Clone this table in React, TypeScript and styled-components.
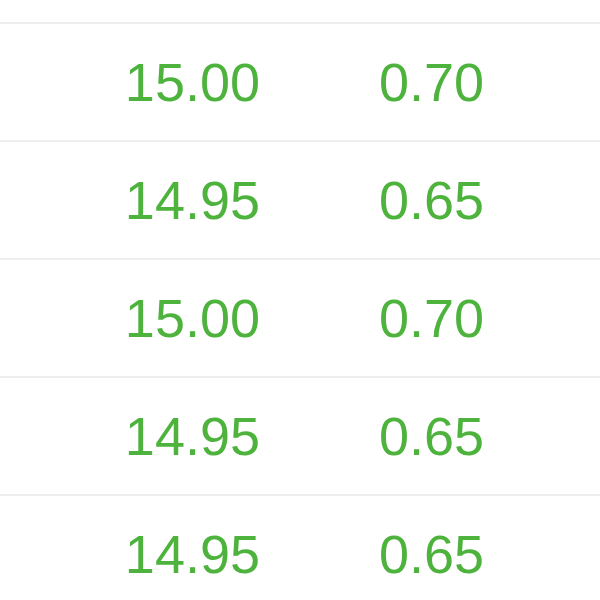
import React from "react";
import styled, { createGlobalStyle } from "styled-components";

const GlobalStyle = createGlobalStyle`
  html, body {
    margin: 0;
    padding: 0;
    background: #ffffff;
  }
  body {
    font-family: "Liberation Sans", Arial, sans-serif;
  }
`;

const Table = styled.div`
  width: 600px;
  height: 600px;
  overflow: hidden;
  padding-top: 22px;
  box-sizing: border-box;
  background: #ffffff;
`;

const Row = styled.div`
  display: grid;
  grid-template-columns: 260px 224px;
  align-items: center;
  justify-items: end;
  height: 118px;
  box-sizing: border-box;
  border-top: 2px solid #eeeeee;
`;

const Cell = styled.span<{ $color?: string }>`
  font-size: 54px;
  line-height: 1;
  color: ${(p) => p.$color || "#4db33d"};
  letter-spacing: 0;
`;

const rows = [
  ["15.00", "0.70"],
  ["14.95", "0.65"],
  ["15.00", "0.70"],
  ["14.95", "0.65"],
  ["14.95", "0.65"],
];

export default function App() {
  return (
    <>
      <GlobalStyle />
      <Table>
        {rows.map((r, i) => (
          <Row key={i}>
            <Cell>{r[0]}</Cell>
            <Cell>{r[1]}</Cell>
          </Row>
        ))}
      </Table>
    </>
  );
}
